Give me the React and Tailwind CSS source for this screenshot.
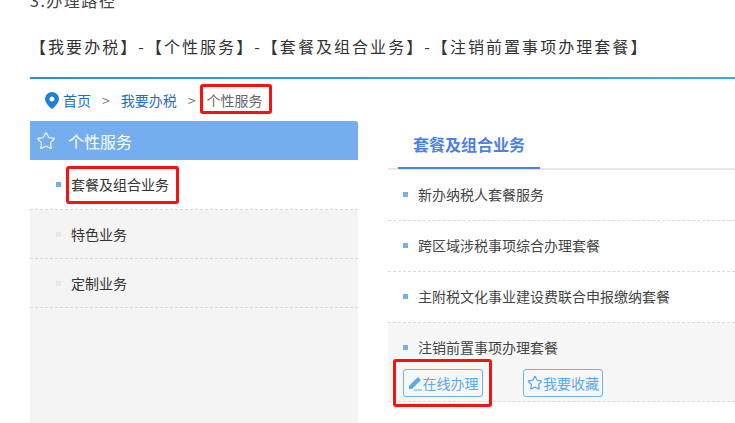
import { Star } from 'lucide-react'

const font = { fontFamily: '"Microsoft YaHei", "Noto Sans CJK SC", sans-serif' }

const sideItems = [
  { name: '套餐及组合业务', active: true },
  { name: '特色业务' },
  { name: '定制业务' },
]

const rows = ['新办纳税人套餐服务', '跨区域涉税事项综合办理套餐', '主附税文化事业建设费联合申报缴纳套餐']

function RedBox({ className }) {
  return <div className={`absolute border-[3px] border-[#f5130f] rounded-[3px] ${className}`} />
}

function PenIcon() {
  return (
    <svg width="15" height="16" viewBox="0 0 15 16" className="shrink-0">
      <path d="M1 11 10 2l3 3-9 9H1z" fill="#5aa9ef" />
      <path d="M6 15h8" stroke="#5aa9ef" strokeWidth="1" />
    </svg>
  )
}

function Row({ children }) {
  return (
    <div className="h-[51px] flex items-center pl-[15px] pb-[1px] border-b border-dashed border-[#d9d9d9] text-[14px] text-[#444]">
      <i className="w-[5px] h-[5px] bg-[#7ab0ea] mr-[10px]" />
      {children}
    </div>
  )
}

export default function App() {
  return (
    <div className="relative w-[735px] h-[423px] overflow-hidden bg-white text-[#333]" style={font}>
      <div className="px-[30px] h-[77px] relative">
        <p className="absolute -top-[10px] left-[30px] text-[16px] leading-[20px] text-[#444] tracking-[1.5px]">3.办理路径</p>
        <p className="pt-[34px] text-[16px] leading-[24px] tracking-[2.05px] text-[#333] whitespace-nowrap">
          【我要办税】-【个性服务】-【套餐及组合业务】-【注销前置事项办理套餐】
        </p>
      </div>

      <div className="ml-[30px] h-[2px] bg-gradient-to-r from-[#2a8fd8] to-[#3cabec]" />

      <div className="ml-[45px] h-[42px] flex items-center text-[14px] text-[#1a6fd0]">
        <svg width="14" height="17" viewBox="0 0 14 17" className="mr-[4px]">
          <path fillRule="evenodd" d="M7 0a7 7 0 0 1 7 7c0 3.6-4 7.6-7 10-3-2.4-7-6.4-7-10a7 7 0 0 1 7-7zm0 4.5a2.5 2.5 0 1 0 0 5 2.5 2.5 0 0 0 0-5z" fill="#1e7fd6" />
        </svg>
        <span>首页</span>
        <span className="mx-[11px] text-[#777]">&gt;</span>
        <span>我要办税</span>
        <span className="mx-[11px] text-[#777]">&gt;</span>
        <span className="text-[#666]">个性服务</span>
      </div>

      <div className="flex">
        <aside className="ml-[30px] w-[328px] h-[302px] bg-[#f4f4f4]">
          <div className="h-[39px] bg-[#74aeee] rounded-tr-[3px] flex items-center pl-[6px] text-white text-[16px]">
            <Star size={20} strokeWidth={1.3} className="mr-[12px]" />
            个性服务
          </div>
          {sideItems.map((it) => (
            <div key={it.name} className={`flex items-center pl-[26px] border-b border-dashed border-[#d9d9d9] text-[14px] text-[#333] ${it.active ? 'bg-white h-[50px]' : 'h-[49px]'}`}>
              <i className={`w-[5px] h-[5px] mr-[10px] ${it.active ? 'bg-[#74aeee]' : 'bg-[#e6e6ee]'}`} />
              {it.name}
            </div>
          ))}
        </aside>

        <main className="ml-[30px] flex-1">
          <div className="h-[49px] border-b-2 border-[#e8e8e8]">
            <div className="ml-[10px] w-[142px] h-[48px] border-b-2 border-[#4a80e8] text-center text-[16px] font-bold text-[#4a80e8] leading-[46px]">
              套餐及组合业务
            </div>
          </div>
          {rows.map((r) => <Row key={r}>{r}</Row>)}
          <div className="h-[79px] bg-[#f7f7f7] border-b border-dashed border-[#d9d9d9] pl-[15px] pt-[14px] text-[14px] text-[#444]">
            <div className="flex items-center leading-[20px]">
              <i className="w-[5px] h-[5px] bg-[#7ab0ea] mr-[10px]" />
              注销前置事项办理套餐
            </div>
            <div className="flex gap-[40px] mt-[12px]">
              <button className="w-[80px] h-[28px] border border-[#6db1ee] rounded-[3px] flex items-center justify-center text-[14px] text-[#5aa9ef]">
                <PenIcon />在线办理
              </button>
              <button className="w-[80px] h-[28px] border border-[#6db1ee] rounded-[3px] flex items-center justify-center text-[14px] text-[#5aa9ef]">
                <Star size={16} strokeWidth={1.8} />我要收藏
              </button>
            </div>
          </div>
          <div className="pl-[30px] pt-[18px] text-[14px] text-[#444] leading-[20px]">发票办理</div>
        </main>
      </div>

      <RedBox className="left-[200px] top-[84px] w-[72px] h-[30px]" />
      <RedBox className="left-[66px] top-[166px] w-[113px] h-[38px]" />
      <RedBox className="left-[393px] top-[359px] w-[99px] h-[48px]" />
    </div>
  )
}
